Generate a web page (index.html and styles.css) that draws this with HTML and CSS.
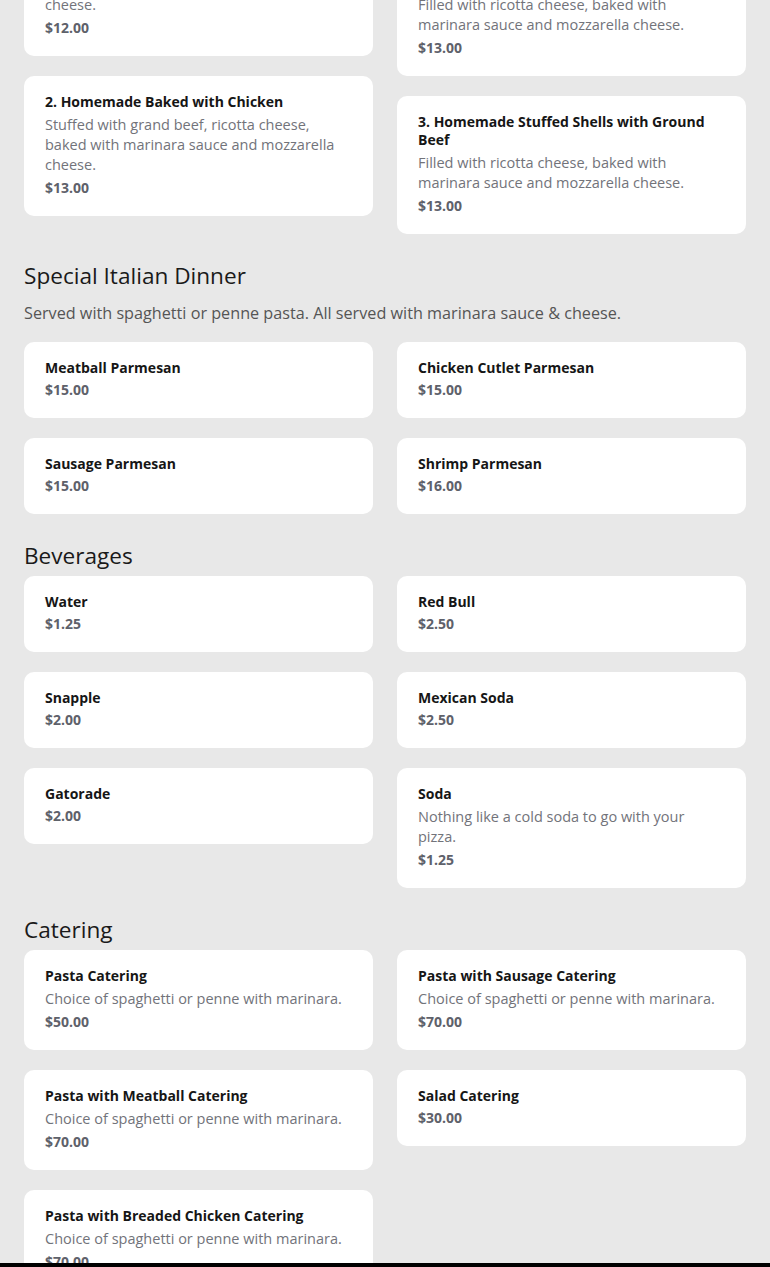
FILE: index.html
```html
<!DOCTYPE html>
<html lang="en">
<head>
<meta charset="utf-8">
<title>Menu</title>
<link rel="stylesheet" href="styles.css">
</head>
<body>
<main class="menu">
  <section class="section">
    <h2 class="section-title">Homemade Pasta</h2>
    <div class="cols">
      <div class="col">
        <article class="card">
          <h3 class="item-name">1. Homemade Baked with Beef</h3>
          <p class="item-desc">Stuffed with grand beef, ricotta cheese, baked with marinara sauce and mozzarella cheese.</p>
          <p class="item-price">$12.00</p>
        </article>
        <article class="card">
          <h3 class="item-name">2. Homemade Baked with Chicken</h3>
          <p class="item-desc">Stuffed with grand beef, ricotta cheese, baked with marinara sauce and mozzarella cheese.</p>
          <p class="item-price">$13.00</p>
        </article>
      </div>
      <div class="col">
        <article class="card">
          <h3 class="item-name">1. Homemade Stuffed Shells</h3>
          <p class="item-desc">Our classic jumbo shells stuffed with three cheeses and fresh herbs.<br>Filled with ricotta cheese, baked with marinara sauce and mozzarella cheese.</p>
          <p class="item-price">$13.00</p>
        </article>
        <article class="card">
          <h3 class="item-name">3. Homemade Stuffed Shells with Ground Beef</h3>
          <p class="item-desc">Filled with ricotta cheese, baked with marinara sauce and mozzarella cheese.</p>
          <p class="item-price">$13.00</p>
        </article>
      </div>
    </div>
  </section>

  <section class="section">
    <h2 class="section-title">Special Italian Dinner</h2>
    <p class="section-desc">Served with spaghetti or penne pasta. All served with marinara sauce &amp; cheese.</p>
    <div class="cols">
      <div class="col">
        <article class="card">
          <h3 class="item-name">Meatball Parmesan</h3>
          <p class="item-price">$15.00</p>
        </article>
        <article class="card">
          <h3 class="item-name">Sausage Parmesan</h3>
          <p class="item-price">$15.00</p>
        </article>
      </div>
      <div class="col">
        <article class="card">
          <h3 class="item-name">Chicken Cutlet Parmesan</h3>
          <p class="item-price">$15.00</p>
        </article>
        <article class="card">
          <h3 class="item-name">Shrimp Parmesan</h3>
          <p class="item-price">$16.00</p>
        </article>
      </div>
    </div>
  </section>

  <section class="section">
    <h2 class="section-title">Beverages</h2>
    <div class="cols">
      <div class="col">
        <article class="card">
          <h3 class="item-name">Water</h3>
          <p class="item-price">$1.25</p>
        </article>
        <article class="card">
          <h3 class="item-name">Snapple</h3>
          <p class="item-price">$2.00</p>
        </article>
        <article class="card">
          <h3 class="item-name">Gatorade</h3>
          <p class="item-price">$2.00</p>
        </article>
      </div>
      <div class="col">
        <article class="card">
          <h3 class="item-name">Red Bull</h3>
          <p class="item-price">$2.50</p>
        </article>
        <article class="card">
          <h3 class="item-name">Mexican Soda</h3>
          <p class="item-price">$2.50</p>
        </article>
        <article class="card">
          <h3 class="item-name">Soda</h3>
          <p class="item-desc">Nothing like a cold soda to go with your pizza.</p>
          <p class="item-price">$1.25</p>
        </article>
      </div>
    </div>
  </section>

  <section class="section">
    <h2 class="section-title">Catering</h2>
    <div class="cols">
      <div class="col">
        <article class="card">
          <h3 class="item-name">Pasta Catering</h3>
          <p class="item-desc">Choice of spaghetti or penne with marinara.</p>
          <p class="item-price">$50.00</p>
        </article>
        <article class="card">
          <h3 class="item-name">Pasta with Meatball Catering</h3>
          <p class="item-desc">Choice of spaghetti or penne with marinara.</p>
          <p class="item-price">$70.00</p>
        </article>
        <article class="card">
          <h3 class="item-name">Pasta with Breaded Chicken Catering</h3>
          <p class="item-desc">Choice of spaghetti or penne with marinara.</p>
          <p class="item-price">$70.00</p>
        </article>
      </div>
      <div class="col">
        <article class="card">
          <h3 class="item-name">Pasta with Sausage Catering</h3>
          <p class="item-desc">Choice of spaghetti or penne with marinara.</p>
          <p class="item-price">$70.00</p>
        </article>
        <article class="card">
          <h3 class="item-name">Salad Catering</h3>
          <p class="item-price">$30.00</p>
        </article>
      </div>
    </div>
  </section>
</main>
<div class="bottom-bar"></div>
</body>
</html>
```
FILE: styles.css
```css
html, body {
  margin: 0;
  padding: 0;
}

body {
  background: #e8e8e8;
  font-family: "Open Sans", "Liberation Sans", sans-serif;
  color: #1a1a1a;
  overflow: hidden;
  height: 1267px;
}

.menu {
  padding: 0 24px;
  margin-top: -146px;
}

.section {
  padding-top: 26px;
}

.section-title {
  margin: 0 0 4px;
  font-size: 22.6px;
  line-height: 32px;
  font-weight: 400;
  color: #1a1a1a;
}

.section-desc {
  margin: 9px 0 17px;
  font-size: 16.2px;
  line-height: 24px;
  color: #555555;
}

.cols {
  display: flex;
  gap: 24px;
  align-items: flex-start;
}

.col {
  flex: 1 1 0;
  min-width: 0;
  display: flex;
  flex-direction: column;
  gap: 20px;
}

.card {
  background: #ffffff;
  border-radius: 10px;
  padding: 17px 21px 18px;
}

.item-name {
  margin: 0;
  font-size: 14px;
  line-height: 18px;
  font-weight: 700;
  color: #161616;
}

.item-desc {
  margin: 4px 0 0;
  font-size: 14.5px;
  line-height: 20px;
  color: #72737a;
}

.item-price {
  margin: 3px 0 0;
  font-size: 14px;
  line-height: 20px;
  font-weight: 700;
  color: #5e616a;
}

.bottom-bar {
  position: fixed;
  left: 0;
  right: 0;
  bottom: 0;
  height: 4px;
  background: #000000;
}
```
